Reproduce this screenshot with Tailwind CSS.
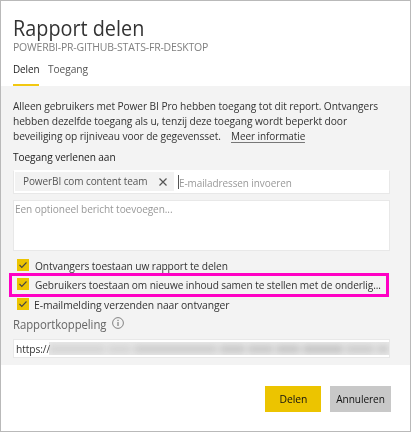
<!DOCTYPE html>
<html lang="nl">
<head>
<meta charset="utf-8">
<title>Rapport delen</title>
<script src="https://cdn.jsdelivr.net/npm/@tailwindcss/browser@4"></script>
</head>
<body class="bg-white">
<div class="flex h-[432px] w-[411px] flex-col overflow-hidden border border-[#b9b9b9] bg-white font-['Open_Sans','Noto_Sans',sans-serif] text-[11.5px] leading-[15px] tracking-[-0.1px] whitespace-nowrap text-[#333]">
  <header class="h-[85px] shrink-0 pl-3 pt-[15px]">
    <h1 class="h-[24px] w-fit origin-left scale-x-[0.922] text-[21.5px] leading-[24px] tracking-normal text-[#333]">Rapport delen</h1>
    <p class="h-[14px] w-fit origin-left scale-x-[0.91] leading-[14px] tracking-[-0.2px] text-[#808080]">POWERBI-PR-GITHUB-STATS-FR-DESKTOP</p>
    <nav class="flex h-[32px] gap-[9px] pt-[7px]">
      <div class="h-[25px] w-[26px] border-b-2 border-[#f2c811] text-[#222]"><span class="inline-block origin-left scale-x-[0.86]">Delen</span></div>
      <span class="h-[15px] origin-left scale-x-[0.89] text-[#555]">Toegang</span>
    </nav>
  </header>
  <main class="h-[279px] shrink-0 bg-[#f3f3f3] pl-3 pr-5">
    <div class="pt-[12px]">
      <p class="w-fit origin-left scale-x-[0.885]">Alleen gebruikers met Power BI Pro hebben toegang tot dit report. Ontvangers</p>
      <p class="w-fit origin-left scale-x-[0.892]">hebben dezelfde toegang als u, tenzij deze toegang wordt beperkt door</p>
      <p class="flex"><span class="w-[218px]"><span class="inline-block origin-left scale-x-[0.887]">beveiliging op rijniveau voor de gegevensset.</span></span><a class="h-[15px] origin-left scale-x-[0.87] border-b border-[#777]">Meer informatie</a></p>
    </div>
    <p class="mt-[6px] w-fit origin-left scale-x-[0.882] text-[#222]">Toegang verlenen aan</p>
    <div class="mt-[6px] flex h-[24px] border border-t-white border-[#e8e8e8] bg-white">
      <div class="ml-px mt-px flex h-[19px] w-[159px] items-center bg-[#f2f2f2] pl-[8px]">
        <div class="h-[17px] w-[136px] shrink-0 text-[#555]"><span class="inline-block origin-left scale-x-[0.87]">PowerBI com content team</span></div>
        <svg class="h-2 w-2 shrink-0" viewBox="0 0 8 8" fill="none" stroke="#555" stroke-width="1.2"><path d="M.5.5l7 7M7.5.5l-7 7"/></svg>
      </div>
      <div class="ml-[4px] mt-[4px] h-[14px] w-px bg-[#555]"></div>
      <span class="mt-[4px] h-[15px] origin-left scale-x-[0.867] text-[#999]">E-mailadressen invoeren</span>
    </div>
    <div class="mt-[6px] h-[51px] border border-[#e8e8e8] bg-white pl-px text-[#999]"><span class="inline-block origin-left scale-x-[0.878]">Een optioneel bericht toevoegen...</span></div>
    <div class="mt-[4px] flex h-[20px] items-center gap-[6px] pl-[4px]">
      <svg class="h-3 w-3 shrink-0" viewBox="0 0 12 12"><path fill="#ecc400" d="M0 0h12v12H0z"/><path d="M2.5 6l2.3 2.4L9.5 3.5" fill="none" stroke="#444" stroke-width="1.1"/></svg>
      <span class="origin-left scale-x-[0.887]">Ontvangers toestaan uw rapport te delen</span>
    </div>
    <div class="-ml-[4px] -mt-[2px] flex h-[24px] w-[380px] items-center gap-[6px] border-3 border-[#ff00c4] pb-[2px] pl-[5px]">
      <svg class="h-3 w-3 shrink-0" viewBox="0 0 12 12"><path fill="#ecc400" d="M0 0h12v12H0z"/><path d="M2.5 6l2.3 2.4L9.5 3.5" fill="none" stroke="#444" stroke-width="1.1"/></svg>
      <span class="origin-left scale-x-[0.88]">Gebruikers toestaan om nieuwe inhoud samen te stellen met de onderlig...</span>
    </div>
    <div class="flex h-[14px] items-center gap-[5px] pl-[4px]">
      <svg class="h-3 w-3 shrink-0" viewBox="0 0 12 12"><path fill="#ecc400" d="M0 0h12v12H0z"/><path d="M2.5 6l2.3 2.4L9.5 3.5" fill="none" stroke="#444" stroke-width="1.1"/></svg>
      <span class="origin-left scale-x-[0.901]">E-mailmelding verzenden naar ontvanger</span>
    </div>
    <div class="mt-[6px] flex h-[18px] text-[12.5px] leading-[16px] text-[#666]">
      <div class="w-[99px]"><span class="inline-block origin-left scale-x-[0.91]">Rapportkoppeling</span></div>
      <svg class="h-3 w-3" viewBox="0 0 12 12" fill="none" stroke="#666"><circle cx="6" cy="6" r="5.4" stroke-width=".8"/><path d="M6 5v4M6 2.8v1.2"/></svg>
    </div>
    <div class="mt-[4px] flex h-[19px] items-center overflow-hidden border border-[#e8e8e8] bg-white pl-[2px]">
      <div class="w-[33px] shrink-0"><span class="inline-block origin-left scale-x-[0.89]">https://</span></div>
      <div class="flex h-[13px] flex-1 items-center overflow-hidden bg-[#e9e9e9]">
        <div class="flex h-[8px] w-full gap-[3px] blur-[3px]">
          <i class="w-[56px] bg-[#d4d4d4]"></i><i class="w-[24px] bg-[#d4d4d4]"></i><i class="w-[83px] bg-[#cdcdcd]"></i><i class="w-[25px] bg-[#c8c8c8]"></i><i class="w-[25px] bg-[#c8c8c8]"></i><i class="w-[24px] bg-[#c6c6c6]"></i><i class="w-[41px] bg-[#c4c4c4]"></i><i class="w-[28px] bg-[#cccccc]"></i><i class="w-[12px] bg-[#cccccc]"></i>
        </div>
      </div>
    </div>
  </main>
  <footer class="flex gap-[9px] pl-[264px] pt-[21px] leading-[26px] text-[#111]">
    <button class="flex h-[26px] w-[56px] justify-center bg-[#ecc400]"><span class="scale-x-[0.9]">Delen</span></button>
    <button class="flex h-[26px] w-[61px] justify-center bg-[#c8c8c8]"><span class="scale-x-[0.88]">Annuleren</span></button>
  </footer>
</div>
</body>
</html>
